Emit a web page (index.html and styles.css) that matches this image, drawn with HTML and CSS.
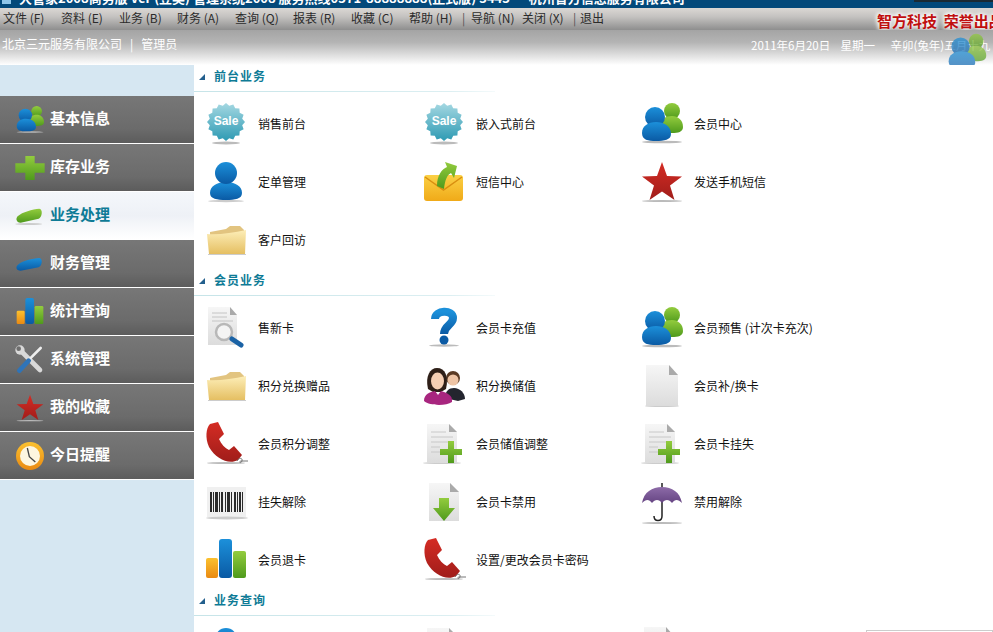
FILE: index.html
```html
<!DOCTYPE html>
<html>
  <head>
    <title>管理系统</title>

    <link rel="stylesheet" href="styles.css">
  </head>

  <body>
    <svg class="iconDefs" xmlns="http://www.w3.org/2000/svg">
      <defs>
        <linearGradient id="g-sale" x1="0" y1="0" x2="0" y2="1"><stop offset="0" stop-color="#a5d8e2"/><stop offset="1" stop-color="#2d9ab3"/></linearGradient>
        <linearGradient id="g-blue" x1="0" y1="0" x2="0" y2="1"><stop offset="0" stop-color="#1c90da"/><stop offset="1" stop-color="#0a5aa4"/></linearGradient>
        <linearGradient id="g-green" x1="0" y1="0" x2="0" y2="1"><stop offset="0" stop-color="#93cc3e"/><stop offset="1" stop-color="#4f9a1c"/></linearGradient>
        <linearGradient id="g-orange" x1="0" y1="0" x2="0" y2="1"><stop offset="0" stop-color="#fbc12f"/><stop offset="1" stop-color="#ea8a12"/></linearGradient>
        <linearGradient id="g-mail" x1="0" y1="0" x2="0" y2="1"><stop offset="0" stop-color="#fbd045"/><stop offset="1" stop-color="#f0aa18"/></linearGradient>
        <linearGradient id="g-red" x1="0" y1="0" x2="0" y2="1"><stop offset="0" stop-color="#d52c24"/><stop offset="1" stop-color="#a01d1a"/></linearGradient>
        <linearGradient id="g-folder" x1="0" y1="0" x2="0" y2="1"><stop offset="0" stop-color="#fdeeb8"/><stop offset="1" stop-color="#e5bf62"/></linearGradient>
        <linearGradient id="g-paper" x1="0" y1="0" x2="0" y2="1"><stop offset="0" stop-color="#f6f6f6"/><stop offset="1" stop-color="#dcdcdc"/></linearGradient>
        <linearGradient id="g-purple" x1="0" y1="0" x2="0" y2="1"><stop offset="0" stop-color="#8d6ba8"/><stop offset="1" stop-color="#664583"/></linearGradient>
      </defs>

      <symbol id="i-sale" viewBox="0 0 48 48">
        <ellipse cx="24" cy="43" rx="14" ry="1.5" fill="#bbb"/>
        <polygon fill="url(#g-sale)" points="43,22 40.2,25.2 41.6,29.3 37.7,31.2 37.4,35.4 33.2,35.7 31.3,39.6 27.2,38.2 24,41 20.8,38.2 16.7,39.6 14.8,35.7 10.6,35.4 10.3,31.2 6.4,29.3 7.8,25.2 5,22 7.8,18.8 6.4,14.7 10.3,12.8 10.6,8.6 14.8,8.3 16.7,4.4 20.8,5.8 24,3 27.2,5.8 31.3,4.4 33.2,8.3 37.4,8.6 37.7,12.8 41.6,14.7 40.2,18.8"/>
        <text x="24" y="25" class="saleText" text-anchor="middle">Sale</text>
      </symbol>

      <symbol id="i-person" viewBox="0 0 48 48">
        <ellipse cx="24" cy="43" rx="18" ry="1.2" fill="#ccc"/>
        <path fill="url(#g-blue)" d="M8 35C8 28 15 24 24 24C33 24 40 28 40 35C40 41 33 42 24 42C15 42 8 41 8 35Z"/>
        <circle cx="24" cy="15" r="11" fill="url(#g-blue)"/>
      </symbol>

      <symbol id="i-users" viewBox="0 0 48 48">
        <ellipse cx="24" cy="42" rx="20" ry="1.3" fill="#bbb"/>
        <circle cx="34" cy="11" r="8" fill="url(#g-green)"/>
        <path fill="url(#g-green)" d="M22 26C22 19 28 16 34 16C40 16 45 20 45 27C45 32 40 33 34 33C28 33 22 32 22 26Z"/>
        <circle cx="17" cy="17" r="10" fill="url(#g-blue)"/>
        <path fill="url(#g-blue)" d="M4 33C4 26 10 22 18 22C26 22 33 26 33 34C33 40 26 41 18 41C10 41 4 40 4 33Z"/>
      </symbol>

      <symbol id="i-mail" viewBox="0 0 48 48">
        <rect x="4" y="17" width="39" height="26" rx="3" fill="url(#g-mail)"/>
        <path fill="none" stroke="#d98f10" stroke-width="1.500" d="M5 19L23.500 32L42 19"/>
        <path fill="url(#g-green)" d="M17 28C17 17 22 11 27 9L25 4L37 8L34 20L31 15C27 17 25 22 24 31Z"/>
      </symbol>

      <symbol id="i-star" viewBox="0 0 48 48">
        <ellipse cx="24" cy="43" rx="20" ry="1" fill="#bbb"/>
        <polygon fill="url(#g-red)" points="24,4 29,18 44,18.500 32,27.500 36.500,42 24,33.500 11.500,42 16,27.500 4,18.500 19,18"/>
      </symbol>

      <symbol id="i-folder" viewBox="0 0 48 48">
        <path fill="#e2c480" d="M8 16L24 13L28 10H38L42 14V30H8Z"/>
        <path fill="url(#g-folder)" d="M5 18C16 19 30 17 44 14L43 38H7Z"/>
        <rect x="6" y="38" width="38" height="1" fill="#ccc"/>
      </symbol>

      <symbol id="i-docSearch" viewBox="0 0 48 48">
        <path fill="url(#g-paper)" d="M6 3H28L35 11V41H6Z"/>
        <path fill="#aaa" d="M28 3L35 11H28Z"/>
        <path stroke="#c4c4c4" d="M10 9H25M10 13H25M10 17H31"/>
        <circle cx="22" cy="28" r="8" fill="#f4f4f4" stroke="#b8b8b8" stroke-width="2.500"/>
        <path stroke="#1a62a5" stroke-width="5" stroke-linecap="round" d="M30 35L39 41"/>
      </symbol>

      <symbol id="i-question" viewBox="0 0 48 48">
        <ellipse cx="24" cy="41.500" rx="15" ry="1.200" fill="#bbb"/>
        <path fill="none" stroke="url(#g-blue)" stroke-width="8" d="M15 15C15 6 33 5 33 14C33 21 24 21 24 30"/>
        <circle cx="24" cy="36" r="4.500" fill="#0a5aa4"/>
      </symbol>

      <symbol id="i-couple" viewBox="0 0 48 48">
        <circle cx="33" cy="16" r="7" fill="#5a3a24"/>
        <circle cx="33" cy="18" r="5.500" fill="#eec4a5"/>
        <path fill="#23252e" d="M25 36C25 29 29 26 34 26C40 26 45 31 45 37L38 39Z"/>
        <path fill="#2e1f18" d="M8 27C5 14 10 6 17 6C25 6 29 14 26 27L21 30H13Z"/>
        <ellipse cx="17.500" cy="19" rx="6.500" ry="8.500" fill="#f5cfb4"/>
        <path fill="#a8267f" d="M4 39C4 32 10 30 15 29L18 33L21 29C27 31 33 33 32 40C26 44 10 44 4 39Z"/>
      </symbol>

      <symbol id="i-doc" viewBox="0 0 48 48">
        <ellipse cx="24" cy="44" rx="17" ry="1" fill="#ccc"/>
        <path fill="url(#g-paper)" d="M8 3H31L40 13V44H8Z"/>
        <path fill="#aaa" d="M31 3L40 13H31Z"/>
      </symbol>

      <symbol id="i-docAdd" viewBox="0 0 48 48">
        <ellipse cx="22" cy="43" rx="19" ry="1" fill="#ccc"/>
        <path fill="url(#g-paper)" d="M7 4H29L37 12V43H7Z"/>
        <path fill="#aaa" d="M29 4L37 12H29Z"/>
        <path stroke="#c8c8c8" d="M11 12H26M11 17H33M11 22H33M11 27H20M11 32H20"/>
        <path fill="url(#g-green)" d="M28 21H34V29H42V35H34V43H28V35H20V29H28Z"/>
      </symbol>

      <symbol id="i-docDown" viewBox="0 0 48 48">
        <path fill="url(#g-paper)" d="M9 5H30L39 14V43H9Z"/>
        <path fill="#aaa" d="M30 5L39 14H30Z"/>
        <path fill="url(#g-green)" d="M19 20H29V30H35L24 43L13 30H19Z"/>
      </symbol>

      <symbol id="i-phone" viewBox="0 0 48 48">
        <ellipse cx="24" cy="43" rx="19" ry="1" fill="#bbb"/>
        <path fill="url(#g-red)" d="M8 4L16 2L22 14L17 19C19 24 23 28 27 30L32 26L40 35L36 40C27 45 14 39 7 27C3 18 4 8 8 4Z"/>
        <path fill="none" stroke="#777" d="M35 41C37 37 41 38 40 41C39 44 36 42 39 41H46"/>
      </symbol>

      <symbol id="i-barcode" viewBox="0 0 48 48">
        <rect x="5" y="9" width="39" height="30" fill="#f0f0f0"/>
        <ellipse cx="25" cy="40" rx="21" ry="1.500" fill="#ccc"/>
        <path stroke="#2b2b2b" stroke-width="20" stroke-dasharray="2 1 1 1 3 1 1 1 2 2 1 1 3 1 1 2 2 1 1 1 2 1 1" d="M8 24H41"/>
      </symbol>

      <symbol id="i-umbrella" viewBox="0 0 48 48">
        <ellipse cx="24" cy="45" rx="20" ry="1" fill="#bbb"/>
        <path fill="none" stroke="#222" stroke-width="1.500" d="M24 5V38C24 44 16 44 16 38"/>
        <path fill="url(#g-purple)" d="M4 25C6 14 14 9 24 9C34 9 42 14 44 25C40 21 37 21 34 25C31 21 27 21 24 25C21 21 17 21 14 25C11 21 8 21 4 25Z"/>
      </symbol>

      <symbol id="i-bars" viewBox="0 0 48 48">
        <rect x="4" y="22" width="12" height="20" rx="2" fill="url(#g-orange)"/>
        <rect x="17" y="3" width="13" height="39" rx="3" fill="url(#g-blue)"/>
        <rect x="31" y="15" width="13" height="27" rx="2" fill="url(#g-green)"/>
      </symbol>

      <symbol id="i-plus" viewBox="0 0 48 48">
        <path fill="url(#g-green)" d="M17 6H31V17H46V31H31V42H17V31H2V17H17Z"/>
      </symbol>

      <symbol id="i-pillGreen" viewBox="0 0 48 48">
        <path fill="url(#g-green)" d="M6 24C12 18 28 14 38 13C44 14 42 26 37 28L10 34C3 34 2 27 6 24Z"/>
        <ellipse cx="22" cy="36" rx="20" ry="1.500" fill="#ccc"/>
      </symbol>

      <symbol id="i-pillBlue" viewBox="0 0 48 48">
        <path fill="url(#g-blue)" d="M6 25C12 19 28 16 38 15C44 16 42 27 37 29L10 34C3 34 2 28 6 25Z"/>
      </symbol>

      <symbol id="i-tools" viewBox="0 0 48 48">
        <path stroke="#d9d9d9" stroke-width="7" stroke-linecap="round" d="M9 9L39 39"/>
        <path stroke="#eee" stroke-width="4" stroke-linecap="round" d="M40 6L24 22"/>
        <path stroke="#2f74b8" stroke-width="7" stroke-linecap="round" d="M22 25L8 40"/>
        <circle cx="9" cy="9" r="7" fill="#d9d9d9"/>
        <circle cx="7" cy="7" r="3.500" fill="#6e6e6e"/>
      </symbol>

      <symbol id="i-clock" viewBox="0 0 48 48">
        <circle cx="24" cy="24" r="21" fill="url(#g-orange)"/>
        <circle cx="24" cy="24" r="15" fill="#fdf6e0"/>
        <path fill="none" stroke="#444" stroke-width="2" d="M20 12L23 25L32 33"/>
      </symbol>
    </svg>

    <div class="titleBar">
      <span class="titleIcon"></span>
      <span class="titleText">大管家2008商务版 ver (豆奖) 管理系统2008 服务热线0571-88888888(正式版) 5445 · 杭州智方信息服务有限公司</span>
      <span class="winButtons"></span>
    </div>

    <div class="menuBar">
      <nav class="menuList">
        <span class="menuItem">文件 (F)</span>
        <span class="menuItem">资料 (E)</span>
        <span class="menuItem">业务 (B)</span>
        <span class="menuItem">财务 (A)</span>
        <span class="menuItem">查询 (Q)</span>
        <span class="menuItem">报表 (R)</span>
        <span class="menuItem">收藏 (C)</span>
        <span class="menuItem menuHelp">帮助 (H)</span>
        <span class="menuSep menuSepWide">|</span>
        <span class="menuItem menuShort">导航 (N)</span>
        <span class="menuItem menuShort">关闭 (X)</span>
        <span class="menuSep">|</span>
        <span class="menuItem">退出</span>
      </nav>
      <div class="brand">智方科技&nbsp;&nbsp;荣誉出品</div>
    </div>

    <div class="infoBar">
      <div class="company">北京三元服务有限公司 &nbsp;&nbsp;|&nbsp;&nbsp; 管理员</div>
      <div class="dateText">2011年6月20日 &nbsp;&nbsp; 星期一 &nbsp;&nbsp;&nbsp;&nbsp; 辛卯(兔年)五月十九</div>
      <svg class="infoUser"><use href="#i-users"/></svg>
    </div>

    <div class="layout">
      <aside class="sidebar">
        <a class="sideItem"><svg class="sideIcon"><use href="#i-users"/></svg><span class="sideLabel">基本信息</span></a>
        <a class="sideItem"><svg class="sideIcon"><use href="#i-plus"/></svg><span class="sideLabel">库存业务</span></a>
        <a class="sideItem sideActive"><svg class="sideIcon"><use href="#i-pillGreen"/></svg><span class="sideLabel">业务处理</span></a>
        <a class="sideItem"><svg class="sideIcon"><use href="#i-pillBlue"/></svg><span class="sideLabel">财务管理</span></a>
        <a class="sideItem"><svg class="sideIcon"><use href="#i-bars"/></svg><span class="sideLabel">统计查询</span></a>
        <a class="sideItem"><svg class="sideIcon"><use href="#i-tools"/></svg><span class="sideLabel">系统管理</span></a>
        <a class="sideItem"><svg class="sideIcon"><use href="#i-star"/></svg><span class="sideLabel">我的收藏</span></a>
        <a class="sideItem"><svg class="sideIcon"><use href="#i-clock"/></svg><span class="sideLabel">今日提醒</span></a>
      </aside>

      <main class="main">
        <h2 class="sectionHead">前台业务</h2>
        <div class="tileGrid">
          <a class="tile"><svg class="tileIcon"><use href="#i-sale"/></svg><span class="tileLabel">销售前台</span></a>
          <a class="tile"><svg class="tileIcon"><use href="#i-sale"/></svg><span class="tileLabel">嵌入式前台</span></a>
          <a class="tile"><svg class="tileIcon"><use href="#i-users"/></svg><span class="tileLabel">会员中心</span></a>
          <a class="tile tileFirst"><svg class="tileIcon"><use href="#i-person"/></svg><span class="tileLabel">定单管理</span></a>
          <a class="tile"><svg class="tileIcon"><use href="#i-mail"/></svg><span class="tileLabel">短信中心</span></a>
          <a class="tile"><svg class="tileIcon"><use href="#i-star"/></svg><span class="tileLabel">发送手机短信</span></a>
          <a class="tile tileFirst"><svg class="tileIcon"><use href="#i-folder"/></svg><span class="tileLabel">客户回访</span></a>
        </div>

        <h2 class="sectionHead">会员业务</h2>
        <div class="tileGrid">
          <a class="tile"><svg class="tileIcon"><use href="#i-docSearch"/></svg><span class="tileLabel">售新卡</span></a>
          <a class="tile"><svg class="tileIcon"><use href="#i-question"/></svg><span class="tileLabel">会员卡充值</span></a>
          <a class="tile"><svg class="tileIcon"><use href="#i-users"/></svg><span class="tileLabel">会员预售 (计次卡充次)</span></a>
          <a class="tile tileFirst"><svg class="tileIcon"><use href="#i-folder"/></svg><span class="tileLabel">积分兑换赠品</span></a>
          <a class="tile"><svg class="tileIcon"><use href="#i-couple"/></svg><span class="tileLabel">积分换储值</span></a>
          <a class="tile"><svg class="tileIcon"><use href="#i-doc"/></svg><span class="tileLabel">会员补/换卡</span></a>
          <a class="tile tileFirst"><svg class="tileIcon"><use href="#i-phone"/></svg><span class="tileLabel">会员积分调整</span></a>
          <a class="tile"><svg class="tileIcon"><use href="#i-docAdd"/></svg><span class="tileLabel">会员储值调整</span></a>
          <a class="tile"><svg class="tileIcon"><use href="#i-docAdd"/></svg><span class="tileLabel">会员卡挂失</span></a>
          <a class="tile tileFirst"><svg class="tileIcon"><use href="#i-barcode"/></svg><span class="tileLabel">挂失解除</span></a>
          <a class="tile"><svg class="tileIcon"><use href="#i-docDown"/></svg><span class="tileLabel">会员卡禁用</span></a>
          <a class="tile"><svg class="tileIcon"><use href="#i-umbrella"/></svg><span class="tileLabel">禁用解除</span></a>
          <a class="tile tileFirst"><svg class="tileIcon"><use href="#i-bars"/></svg><span class="tileLabel">会员退卡</span></a>
          <a class="tile"><svg class="tileIcon"><use href="#i-phone"/></svg><span class="tileLabel">设置/更改会员卡密码</span></a>
        </div>

        <h2 class="sectionHead">业务查询</h2>
        <div class="tileGrid">
          <a class="tile"><svg class="tileIcon"><use href="#i-person"/></svg></a>
          <a class="tile"><svg class="tileIcon"><use href="#i-docAdd"/></svg></a>
          <a class="tile"><svg class="tileIcon"><use href="#i-docSearch"/></svg></a>
          <div class="searchBox"></div>
        </div>
      </main>
    </div>
  </body>
</html>
```

FILE: styles.css
```css
html,
body {
  height: 632px;
}

body {
  margin: 0;
  overflow: hidden;
  background-color: #fff;
  color: #111;
  font-family: "Noto Sans CJK SC", "Liberation Sans", sans-serif;
  font-size: 12px;
}

.iconDefs {
  display: block;
  width: 0;
  height: 0;
}

.saleText {
  fill: #fff;
  font-family: "Liberation Sans", sans-serif;
  font-size: 12px;
  font-weight: bold;
}

/* title bar, only the lower edge of it is on screen */
.titleBar {
  display: flex;
  height: 8px;
  overflow: hidden;
  background-color: #03497a;
  color: #fff;
  font-size: 13px;
  font-weight: bold;
  white-space: nowrap;
}
.titleIcon {
  flex: none;
  width: 9px;
  height: 4px;
  margin: 0 8px 0 2px;
  background-color: #8ec6ea;
}
.titleText {
  flex: none;
  width: 895px;
  margin-top: -11px;
  line-height: 18px;
}
.winButtons {
  flex: 1;
  height: 2px;
  background-color: #1c2a33;
}

/* menu */
.menuBar {
  display: grid;
  grid-template-columns: 877px 1fr;
  height: 22px;
  overflow: hidden;
  background: linear-gradient(#dbd8d4, #c4c2c0 40%, #8e8e8e);
  white-space: nowrap;
}
.menuList {
  display: flex;
  padding-left: 3px;
}
.menuItem {
  flex: none;
  width: 58px;
  color: #2b2b2b;
  line-height: 20px;
}
.menuHelp {
  width: 53px;
}
.menuShort {
  width: 51px;
}
.menuSep {
  flex: none;
  width: 7px;
  color: #555;
  line-height: 20px;
}
.menuSepWide {
  width: 9px;
}
.brand {
  color: #c00f0f;
  font-size: 15px;
  font-weight: bold;
  line-height: 26px;
  text-shadow: 0 0 4px #fff, 0 0 4px #fff, 0 0 6px #fff;
}

/* company and date strip */
.infoBar {
  position: relative;
  display: grid;
  grid-template-columns: 749px 1fr;
  height: 35px;
  padding-left: 2px;
  overflow: hidden;
  background: linear-gradient(#a4a4a4, #b4b4b4 35%, #fff);
  color: #fff;
  line-height: 30px;
  white-space: nowrap;
}
.company {
  line-height: 28px;
}
.dateText {
  font-size: 11.5px;
}
.infoUser {
  position: absolute;
  top: 1px;
  right: 4px;
  width: 44px;
  height: 44px;
  opacity: 0.7;
}

/* sidebar and main area */
.layout {
  display: flex;
  height: 567px;
  overflow: hidden;
}

.sidebar {
  flex: none;
  width: 194px;
  padding-top: 31px;
  box-sizing: border-box;
  background-color: #d6e7f2;
}
.sideItem {
  display: flex;
  align-items: center;
  gap: 4px;
  height: 48px;
  padding-left: 14px;
  box-sizing: border-box;
  border-bottom: 1px solid #fff;
  background: linear-gradient(#777, #6b6b6b 70%, #5c5c5c);
  color: #fff;
  font-size: 15px;
  font-weight: bold;
}
.sideActive {
  background: linear-gradient(#f4f7fb, #eef1f6 50%, #fff);
  color: #0e7b96;
}
.sideIcon {
  flex: none;
  width: 32px;
  height: 32px;
}
.sideLabel {
  margin-bottom: 4px;
}

.main {
  flex: 1;
}

.sectionHead {
  position: relative;
  width: 281px;
  height: 27px;
  margin: 0;
  padding-left: 20px;
  border-bottom: 1px solid transparent;
  background:
    linear-gradient(90deg, #c6e4e8, #dceff2 85%, #f4fafb) bottom / 100% 1px no-repeat;
  color: #0e7b96;
  font-size: 12px;
  font-weight: bold;
  letter-spacing: 1px;
  line-height: 21px;
}
.sectionHead::before {
  content: "";
  position: absolute;
  top: 9px;
  left: 5px;
  border-style: solid;
  border-width: 0 0 6px 6px;
  border-color: transparent transparent #235f8d transparent;
}

.tileGrid {
  display: grid;
  grid-template-columns: repeat(3, 218px) 1fr;
  grid-auto-rows: 58px;
  padding: 2px 0 0 8px;
}
.tile {
  display: flex;
  align-items: center;
  gap: 8px;
  white-space: nowrap;
}
.tileFirst {
  grid-column: 1;
}
.tileIcon {
  flex: none;
  width: 48px;
  height: 48px;
}
.tileLabel {
  margin-bottom: 2px;
}

.searchBox {
  height: 40px;
  margin: 11px 0 0 10px;
  border: 1px solid #ccc;
}
```
